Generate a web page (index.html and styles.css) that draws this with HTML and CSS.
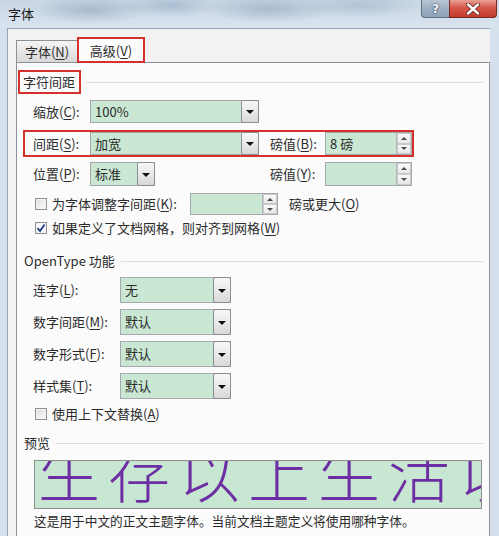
FILE: index.html
```html
<!DOCTYPE html>
<html lang="zh-CN">
<head>
<meta charset="utf-8">
<title>字体</title>
<link rel="stylesheet" href="styles.css">
</head>
<body>
<div class="window">
  <div class="titlebar">
    <span class="title">字体</span>
    <div class="caption-buttons">
      <span class="cbtn help">?</span>
      <span class="cbtn close">
        <svg width="14" height="12" viewBox="0 0 14 12">
          <path d="M2 1.5 L12 10.5 M12 1.5 L2 10.5" stroke="#6b2a22" stroke-width="4.2" stroke-linecap="round"/>
          <path d="M2 1.5 L12 10.5 M12 1.5 L2 10.5" stroke="#ffffff" stroke-width="2.4" stroke-linecap="round"/>
        </svg>
      </span>
    </div>
  </div>

  <div class="client">
    <div class="tabs">
      <div class="tab">字体(<u>N</u>)</div>
      <div class="tab active">高级(<u>V</u>)</div>
    </div>

    <div class="page">
      <!-- 字符间距 -->
      <div class="gh gh-first">
        <span class="gh-title marked">字符间距</span>
        <span class="gh-line"></span>
      </div>

      <div class="row r-scale">
        <span class="lbl">缩放(<u>C</u>):</span>
        <div class="combo"><span class="val">100%</span><span class="drop"></span></div>
      </div>

      <div class="row r-spacing marked">
        <span class="lbl">间距(<u>S</u>):</span>
        <div class="combo"><span class="val">加宽</span><span class="drop"></span></div>
        <span class="lbl lbl2">磅值(<u>B</u>):</span>
        <div class="spin"><span class="val">8 磅</span><span class="spin-btns"><i class="up"></i><i class="down"></i></span></div>
      </div>

      <div class="row r-pos">
        <span class="lbl">位置(<u>P</u>):</span>
        <div class="combo combo-short"><span class="val">标准</span><span class="drop"></span></div>
        <span class="lbl lbl2">磅值(<u>Y</u>):</span>
        <div class="spin"><span class="val"></span><span class="spin-btns"><i class="up"></i><i class="down"></i></span></div>
      </div>

      <div class="crow r-kern">
        <span class="cb"></span>
        <span class="ctext ctext-kern">为字体调整字间距(<u>K</u>):</span>
        <div class="spin spin-kern"><span class="val"></span><span class="spin-btns"><i class="up"></i><i class="down"></i></span></div>
        <span class="ctext after">磅或更大(<u>O</u>)</span>
      </div>

      <div class="crow r-grid">
        <span class="cb checked">
          <svg width="10" height="10" viewBox="0 0 10 10"><path d="M1.5 5.2 L4 8 L8.6 1.4" fill="none" stroke="#1f3f86" stroke-width="1.8"/></svg>
        </span>
        <span class="ctext">如果定义了文档网格，则对齐到网格(<u>W</u>)</span>
      </div>

      <!-- OpenType 功能 -->
      <div class="gh gh-ot">
        <span class="gh-title">OpenType 功能</span>
        <span class="gh-line"></span>
      </div>

      <div class="orow orow-first">
        <span class="lbl">连字(<u>L</u>):</span>
        <div class="combo"><span class="val">无</span><span class="drop"></span></div>
      </div>
      <div class="orow">
        <span class="lbl">数字间距(<u>M</u>):</span>
        <div class="combo"><span class="val">默认</span><span class="drop"></span></div>
      </div>
      <div class="orow">
        <span class="lbl">数字形式(<u>F</u>):</span>
        <div class="combo"><span class="val">默认</span><span class="drop"></span></div>
      </div>
      <div class="orow">
        <span class="lbl">样式集(<u>T</u>):</span>
        <div class="combo"><span class="val">默认</span><span class="drop"></span></div>
      </div>

      <div class="crow r-ctx">
        <span class="cb"></span>
        <span class="ctext">使用上下文替换(<u>A</u>)</span>
      </div>

      <!-- 预览 -->
      <div class="gh gh-prev">
        <span class="gh-title">预览</span>
        <span class="gh-line"></span>
      </div>

      <div class="preview"><span class="preview-text">生存以上生活以</span></div>
      <div class="caption">这是用于中文的正文主题字体。当前文档主题定义将使用哪种字体。</div>
    </div>
  </div>
</div>
</body>
</html>
```

FILE: styles.css
```css
* { box-sizing: border-box; }

html, body {
  margin: 0;
  padding: 0;
}

body {
  width: 499px;
  height: 536px;
  overflow: hidden;
  font-family: "Noto Sans CJK SC", "Noto Sans", sans-serif;
  font-size: 13px;
  color: #2b2b2b;
  background: #d4e0ec;
}

u { text-decoration: underline; text-underline-offset: 2px; }

.window {
  height: 536px;
  display: flex;
  flex-direction: column;
}

/* glass title bar */
.titlebar {
  height: 28px;
  flex: none;
  display: flex;
  align-items: flex-start;
  background:
    radial-gradient(ellipse 60px 14px at 90px 10px, rgba(120,145,175,0.45), rgba(120,145,175,0) 100%),
    radial-gradient(ellipse 50px 12px at 170px 6px, rgba(110,140,175,0.35), rgba(110,140,175,0) 100%),
    radial-gradient(ellipse 70px 14px at 270px 9px, rgba(115,140,170,0.40), rgba(115,140,170,0) 100%),
    radial-gradient(ellipse 60px 12px at 360px 6px, rgba(130,155,185,0.35), rgba(130,155,185,0) 100%),
    linear-gradient(180deg, #c9d6e3 0%, #d3dfeb 60%, #d8e3ee 100%);
}

.title {
  margin: 6px 0 0 8px;
  font-size: 13px;
  line-height: 16px;
  color: #151515;
}

.caption-buttons {
  margin-left: auto;
  margin-right: 2px;
  display: flex;
}

.cbtn {
  height: 18px;
  display: flex;
  align-items: center;
  justify-content: center;
  border: 1px solid #5f6e80;
  border-top: none;
}

.help {
  width: 28px;
  border-radius: 0 0 0 4px;
  border-right: none;
  background: linear-gradient(180deg, #b9c6d4 0%, #9fb0c3 50%, #8ea2b8 100%);
  color: #f4f7fb;
  font-family: "DejaVu Sans", sans-serif;
  font-weight: bold;
  font-size: 13px;
  text-shadow: 0 0 2px #2c3e55, 0 0 1px #2c3e55;
}

.close {
  width: 48px;
  border-radius: 0 0 4px 0;
  border-color: #7a2a22;
  background: linear-gradient(180deg, #e8a196 0%, #d5584a 45%, #c23a2b 100%);
}

/* dialog client area */
.client {
  flex: 1;
  margin: 0 9px 0 7px;
  background: #f2f2f2;
  border-top: 1px solid #93a3b5;
  border-left: 1px solid #93a3b5;
  padding: 8px 0 0 8px;
  display: flex;
  flex-direction: column;
}

.tabs {
  height: 25px;
  display: flex;
  align-items: flex-end;
}

.tab {
  width: 62px;
  height: 22px;
  border: 1px solid #8c9097;
  border-bottom: none;
  background: linear-gradient(180deg, #f4f4f4 0%, #e6e6e6 50%, #d9d9d9 100%);
  display: flex;
  align-items: center;
  justify-content: center;
  line-height: 16px;
}

.tab.active {
  position: relative;
  z-index: 1;
  width: 68px;
  height: 26px;
  margin-left: -1px;
  margin-bottom: -1px;
  border: 2px solid #d4302c;
  background: #fcfcfc;
  padding-top: 1px;
}

.page {
  flex: 1;
  border: 1px solid #8d9098;
  border-bottom: none;
  background: #fbfbfb;
  display: flex;
  flex-direction: column;
}

/* group headings with a rule */
.gh {
  display: flex;
  align-items: center;
  height: 22px;
  margin-right: 6px;
}

.gh-title { line-height: 18px; white-space: nowrap; }

.gh-line {
  flex: 1;
  height: 0;
  border-top: 1px solid #dadde1;
  margin-left: 6px;
}

.gh-first { margin-top: 7px; height: 24px; padding-left: 1px; }
.gh-first .gh-line { margin-left: 5px; }

.gh-title.marked {
  border: 2px solid #d4302c;
  padding: 0 4px 0 3px;
  line-height: 20px;
}

.gh-ot { margin-top: 12px; padding-left: 7px; }
.gh-prev { margin-top: 8px; padding-left: 7px; }

/* label + field rows */
.row {
  display: grid;
  grid-template-columns: 57px 169px 66px 87px;
  align-items: center;
  padding-left: 16px;
  width: max-content;
}

.lbl { white-space: nowrap; line-height: 16px; }
.lbl2 { padding-left: 11px; }

.r-scale { margin-top: 6px; height: 23px; }

.row.marked {
  margin-top: 7px;
  margin-left: 6px;
  padding-left: 8px;
  height: 27px;
  border: 2px solid #d4302c;
}

.r-pos { margin-top: 5px; height: 24px; }

.combo {
  height: 100%;
  display: flex;
  border: 1px solid #a5a9ae;
  background: #c9e7d2;
}

.combo-short { width: 65px; }

.val {
  flex: 1;
  display: flex;
  align-items: center;
  padding-left: 4px;
  line-height: 16px;
  white-space: nowrap;
}

.drop {
  width: 18px;
  flex: none;
  margin: -1px -1px -1px 0;
  border: 1px solid #8a8d91;
  border-radius: 2px;
  background: linear-gradient(180deg, #f7f7f7 0%, #e9e9e9 50%, #d8d8d8 100%);
  display: flex;
  align-items: center;
  justify-content: center;
}

.drop::after {
  content: "";
  border-left: 4px solid transparent;
  border-right: 4px solid transparent;
  border-top: 4px solid #111;
  margin-top: 1px;
}

.spin {
  height: 100%;
  display: flex;
  border: 1px solid #a5a9ae;
  background: #c9e7d2;
}

.spin-btns {
  width: 15px;
  flex: none;
  display: flex;
  flex-direction: column;
  border-left: 1px solid #b5b8bb;
  background: #f3f3f3;
}

.spin-btns i {
  flex: 1;
  display: flex;
  align-items: center;
  justify-content: center;
  border: 1px solid #c7c9cc;
  background: linear-gradient(180deg, #fafafa, #e7e7e7);
}

.spin-btns .up::after {
  content: "";
  border-left: 3px solid transparent;
  border-right: 3px solid transparent;
  border-bottom: 3px solid #4a4a4a;
}

.spin-btns .down::after {
  content: "";
  border-left: 3px solid transparent;
  border-right: 3px solid transparent;
  border-top: 3px solid #4a4a4a;
}

/* checkbox rows */
.crow {
  display: flex;
  align-items: center;
  padding-left: 18px;
}

.cb {
  width: 12px;
  height: 12px;
  flex: none;
  border: 1px solid #8f9194;
  background: linear-gradient(135deg, #dcdcdc 0%, #f0f0f0 60%, #fafafa 100%);
  box-shadow: inset 0 0 0 1px #f4f4f4;
  display: flex;
  align-items: center;
  justify-content: center;
}

.cb.checked { background: #f7f9fc; }

.ctext {
  margin-left: 5px;
  line-height: 16px;
  white-space: nowrap;
}

.ctext-kern { width: 138px; }

.r-kern { margin-top: 7px; height: 22px; }
.spin-kern { width: 88px; height: 22px; }
.ctext.after { margin-left: 11px; }

.r-grid { margin-top: 3px; height: 20px; }

.orow {
  display: grid;
  grid-template-columns: 87px 111px;
  align-items: center;
  padding-left: 16px;
  height: 26px;
  margin-top: 6px;
}

.orow-first { margin-top: 5px; }

.r-ctx { margin-top: 5px; height: 20px; }

/* preview */
.preview {
  margin: 6px 0 0 17px;
  width: 448px;
  height: 49px;
  border: 1px solid #8b8e8c;
  background: #c8e7d3;
  overflow: hidden;
  white-space: nowrap;
  padding-left: 3px;
}

.preview-text {
  display: block;
  margin-top: -21px;
  font-size: 62px;
  line-height: 62px;
  font-weight: 300;
  letter-spacing: 8px;
  color: #6d2ea3;
}

.caption {
  margin-top: 3px;
  padding-left: 17px;
  font-size: 12.7px;
  line-height: 18px;
  white-space: nowrap;
}
```
